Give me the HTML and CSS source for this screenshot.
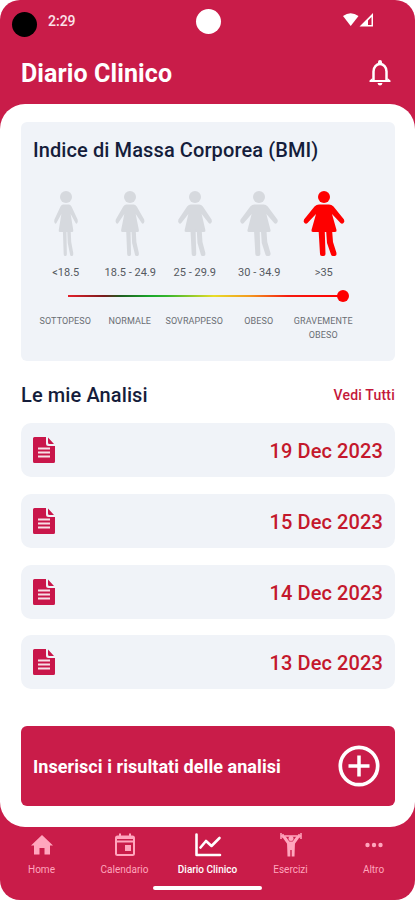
FILE: index.html
```html
<!DOCTYPE html>
<html lang="it">

<head>
    <meta charset="UTF-8">
    <meta name="viewport" content="width=device-width, initial-scale=1.0">
    <title>Diario Clinico</title>
    <link rel="stylesheet" href="styles.css">
</head>

<body>
    <svg class="defs" width="0" height="0">
        <symbol id="body" viewBox="-21 0 42 66" overflow="visible">
            <path d="M-5 13.500H5Q7.500 13.500 9.500 15.500L20 28.500Q21 30.500 19.500 32Q18 33.500 16.500 32L8 23L12.500 39Q13 41 11 41H-11Q-13 41-12.500 39L-8 23L-16.500 32Q-18 33.500-19.500 32Q-21 30.500-20 28.500L-9.500 15.500Q-7.500 13.500-5 13.500Z" />
            <path d="M-5.500 38H.700L1.500 63Q1.500 65-.500 65H-2Q-4 65-4 63ZM2 38H8L9 51L12.500 62Q13 64.500 11 65H9Q7.500 65 7 63.500L3 52Z" />
        </symbol>
        <symbol id="doc" viewBox="0 0 22 26">
            <path fill="#c9164a" d="M1.500 0H13V6.500Q13 9 15.500 9H22V24.500Q22 26 20.500 26H1.500Q0 26 0 24.500V1.500Q0 0 1.500 0ZM15 0.500L21 7H16.500Q15 7 15 5.500Z" />
            <path stroke="#f7dfe6" stroke-width="1.900" d="M5 11.500H17M5 15.500H17M5 19.500H17" />
        </symbol>
    </svg>

    <div class="screen">
        <div class="status-bar">
            <span class="record-dot"></span>
            <span class="time">2:29</span>
            <span class="camera"></span>
            <svg class="signal" width="31" height="14" viewBox="0 0 31 14">
                <path fill="#fff" d="M0 3Q7.500-2.500 15.500 3L7.700 13Z" />
                <path fill="#fff" fill-rule="evenodd" d="M30 0V13.500H16.500ZM28.500 4L25 7.500V12H28.500Z" />
            </svg>
        </div>

        <header>
            <h1>Diario Clinico</h1>
            <svg class="bell" width="22" height="26" viewBox="0 0 22 26">
                <path fill="none" stroke="#fff" stroke-width="2.500" stroke-linejoin="round" d="M4.500 20V11.500C4.500 7 7.500 4 11 4S17.500 7 17.500 11.500V20" />
                <path fill="#fff" d="M9 4V2Q9 0 11 0T13 2V4ZM3.500 18L.500 20.500V22H21.500V20.500L18.500 18V20H3.500ZM8.500 23H13.500Q13 25.500 11 25.500T8.500 23Z" />
            </svg>
        </header>

        <main>
            <section class="bmi-card">
                <h2>Indice di Massa Corporea (BMI)</h2>
                <div class="bmi-grid">
                    <div class="bmi-col">
                        <svg class="figure" viewBox="-21 0 42 66"><circle cy="6" r="6" /><g transform="scale(.58 1)"><use href="#body" x="-21" width="42" height="66" /></g></svg>
                        <span>&lt;18.5</span>
                    </div>
                    <div class="bmi-col">
                        <svg class="figure" viewBox="-21 0 42 66"><circle cy="6" r="6" /><g transform="scale(.71 1)"><use href="#body" x="-21" width="42" height="66" /></g></svg>
                        <span>18.5 - 24.9</span>
                    </div>
                    <div class="bmi-col">
                        <svg class="figure" viewBox="-21 0 42 66"><circle cy="6" r="6" /><g transform="scale(.83 1)"><use href="#body" x="-21" width="42" height="66" /></g></svg>
                        <span>25 - 29.9</span>
                    </div>
                    <div class="bmi-col">
                        <svg class="figure" viewBox="-21 0 42 66"><circle cy="6" r="6" /><g transform="scale(.92 1)"><use href="#body" x="-21" width="42" height="66" /></g></svg>
                        <span>30 - 34.9</span>
                    </div>
                    <div class="bmi-col active">
                        <svg class="figure" viewBox="-21 0 42 66"><circle cy="6" r="6" /><use href="#body" x="-21" width="42" height="66" /></svg>
                        <span>&gt;35</span>
                    </div>
                </div>
                <div class="scale"><span class="knob"></span></div>
                <div class="bmi-labels">
                    <span>SOTTOPESO</span>
                    <span>NORMALE</span>
                    <span>SOVRAPPESO</span>
                    <span>OBESO</span>
                    <span>GRAVEMENTE OBESO</span>
                </div>
            </section>

            <div class="section-head">
                <h2>Le mie Analisi</h2>
                <a class="see-all">Vedi Tutti</a>
            </div>

            <div class="list">
                <div class="row"><svg width="22" height="26"><use href="#doc" /></svg><span>19 Dec 2023</span></div>
                <div class="row"><svg width="22" height="26"><use href="#doc" /></svg><span>15 Dec 2023</span></div>
                <div class="row"><svg width="22" height="26"><use href="#doc" /></svg><span>14 Dec 2023</span></div>
                <div class="row"><svg width="22" height="26"><use href="#doc" /></svg><span>13 Dec 2023</span></div>
            </div>

            <div class="add-button">
                <span>Inserisci i risultati delle analisi</span>
                <svg width="42" height="42" viewBox="0 0 42 42" fill="none" stroke="#fff">
                    <circle cx="21" cy="21" r="18.700" stroke-width="3.700" />
                    <path stroke-width="3.500" d="M21 10.500V31.500M10.500 21H31.500" />
                </svg>
            </div>
        </main>

        <nav>
            <div class="tab">
                <svg width="28" height="26" viewBox="0 0 28 26" fill="currentColor"><path d="M14 3L25 13.500H22V22.500H16.500V16H11.500V22.500H6V13.500H3Z" /></svg>
                <span>Home</span>
            </div>
            <div class="tab">
                <svg width="28" height="26" viewBox="0 0 28 26" fill="none" stroke="currentColor" stroke-width="2">
                    <rect x="5" y="4.500" width="18" height="18.500" rx="1.500" />
                    <path d="M5 6H23M5 9.500H23M9 1.500V5M19 1.500V5" />
                    <path fill="currentColor" stroke="none" d="M14 13H20V19H14Z" />
                </svg>
                <span>Calendario</span>
            </div>
            <div class="tab active">
                <svg width="28" height="26" viewBox="0 0 28 26" fill="none" stroke="currentColor" stroke-width="2.600" stroke-linecap="round" stroke-linejoin="round">
                    <path d="M2.500 2.500V23H26M6.500 15.500L12 9L17.500 14L25.500 6" />
                </svg>
                <span>Diario Clinico</span>
            </div>
            <div class="tab">
                <svg width="28" height="26" viewBox="0 0 28 26">
                    <path fill="none" stroke="currentColor" stroke-width="1.500" d="M3.500 4H24.500M4 1V7M6 2V6M24 1V7M22 2V6" />
                    <path fill="none" stroke="currentColor" stroke-width="3" stroke-linecap="round" stroke-linejoin="round" d="M7.500 5.500L11.500 11H16.500L20.500 5.500" />
                    <circle cx="14" cy="6.500" r="2.500" fill="currentColor" />
                    <path fill="currentColor" d="M10 10H18L17.500 24.500H14.700V18H13.300V24.500H10.500Z" />
                </svg>
                <span>Esercizi</span>
            </div>
            <div class="tab">
                <svg width="28" height="26" viewBox="0 0 28 26" fill="currentColor"><circle cx="7.500" cy="13" r="2.200" /><circle cx="14" cy="13" r="2.200" /><circle cx="20.500" cy="13" r="2.200" /></svg>
                <span>Altro</span>
            </div>
        </nav>
        <div class="home-bar"></div>
    </div>
</body>

</html>
```
FILE: styles.css
```css
* {
    box-sizing: border-box;
}

body {
    font-family: Roboto, "Liberation Sans", sans-serif;
    background-color: #fff;
    margin: 0;
}

.defs {
    position: absolute;
}

.screen {
    width: 415px;
    height: 900px;
    background-color: #c91c49;
    border-radius: 20px;
    overflow: hidden;
    display: flex;
    flex-direction: column;
}

.status-bar {
    height: 44px;
    padding: 9px 41px 0 12px;
    display: flex;
    align-items: flex-start;
}

.record-dot,
.camera {
    width: 25px;
    height: 25px;
    border-radius: 50%;
    background-color: #fff;
}

.record-dot {
    background-color: #000;
    margin-top: 3px;
}

.time {
    width: 148px;
    margin: 3px 0 0 11px;
    color: #fbe3ea;
    font-size: 14px;
    line-height: 18px;
    font-weight: 500;
}

.signal {
    margin: 4px 0 0 auto;
}

header {
    height: 60px;
    padding: 0 24px 0 21px;
    display: flex;
    justify-content: space-between;
    align-items: center;
}

h1 {
    margin: 0;
    color: #fff;
    font-size: 25px;
    line-height: 30px;
    font-weight: 700;
    letter-spacing: 0.1px;
}

.bell {
    margin-bottom: 2px;
}

main {
    height: 723px;
    padding: 18px 20px 0 21px;
    background-color: #fff;
    border-radius: 25px;
}

.bmi-card {
    height: 239px;
    padding: 16px 12px 0;
    background-color: #f0f3f8;
    border-radius: 6px;
}

h2 {
    margin: 0;
    color: #151d3b;
    font-size: 20px;
    line-height: 24px;
    font-weight: 500;
    letter-spacing: 0.1px;
}

.bmi-grid,
.bmi-labels {
    display: grid;
    grid-template-columns: repeat(5, 64.5px);
    text-align: center;
}

.bmi-grid {
    margin: 29px 0 0 0.5px;
}

.bmi-col {
    display: flex;
    flex-direction: column;
    align-items: center;
    color: #555960;
    font-size: 11px;
    line-height: 14px;
    white-space: nowrap;
}

.figure {
    width: 42px;
    height: 66px;
    margin-bottom: 9px;
    fill: #d6d9de;
}

.active .figure {
    fill: #fe0000;
}

.scale {
    width: 275px;
    height: 2px;
    margin: 15px 0 0 35px;
    background: linear-gradient(to right, #e5202b, #7a1a1c 13%, #1f5c20 19%, #19a82b 30%, #35b52d 36%, #e8dd28 53%, #f39a20 66%, #f51a10 80%, #fe0000);
    display: flex;
    justify-content: flex-end;
    align-items: center;
}

.knob {
    width: 12px;
    height: 12px;
    margin-right: -6px;
    border-radius: 50%;
    background-color: #fe0000;
    flex-shrink: 0;
}

.bmi-labels {
    margin-top: 17px;
    color: #6a6e74;
    font-size: 9px;
    line-height: 14px;
    letter-spacing: 0.1px;
}

.section-head {
    height: 62px;
    padding-top: 6px;
    display: flex;
    justify-content: space-between;
    align-items: center;
}

.see-all {
    color: #c4183a;
    font-size: 14px;
    font-weight: 500;
    letter-spacing: 0.2px;
}

.list {
    display: flex;
    flex-direction: column;
    gap: 16.8px;
}

.row {
    height: 54px;
    padding: 0 12px;
    display: flex;
    justify-content: space-between;
    align-items: center;
    background-color: #f0f3f8;
    border-radius: 10px;
    color: #c4182c;
    font-size: 20px;
    font-weight: 500;
    letter-spacing: 0.1px;
}

.row span,
.add-button span {
    padding-top: 2px;
}

.add-button {
    height: 80px;
    margin-top: 36.6px;
    padding: 0 15px 0 12px;
    display: flex;
    justify-content: space-between;
    align-items: center;
    background-color: #c91c49;
    border-radius: 6px;
    color: #fff;
    font-size: 18px;
    font-weight: 700;
    letter-spacing: 0.06px;
}

nav {
    height: 59px;
    padding-top: 5px;
    display: flex;
}

.tab {
    flex: 1;
    display: flex;
    flex-direction: column;
    align-items: center;
    color: #ffa6bd;
    font-size: 10px;
    line-height: 14px;
    gap: 5px;
}

.tab.active {
    color: #fff;
    font-weight: 500;
}

.home-bar {
    width: 109px;
    height: 4px;
    margin: 0 auto;
    background-color: #fff;
    border-radius: 2px;
}
```
